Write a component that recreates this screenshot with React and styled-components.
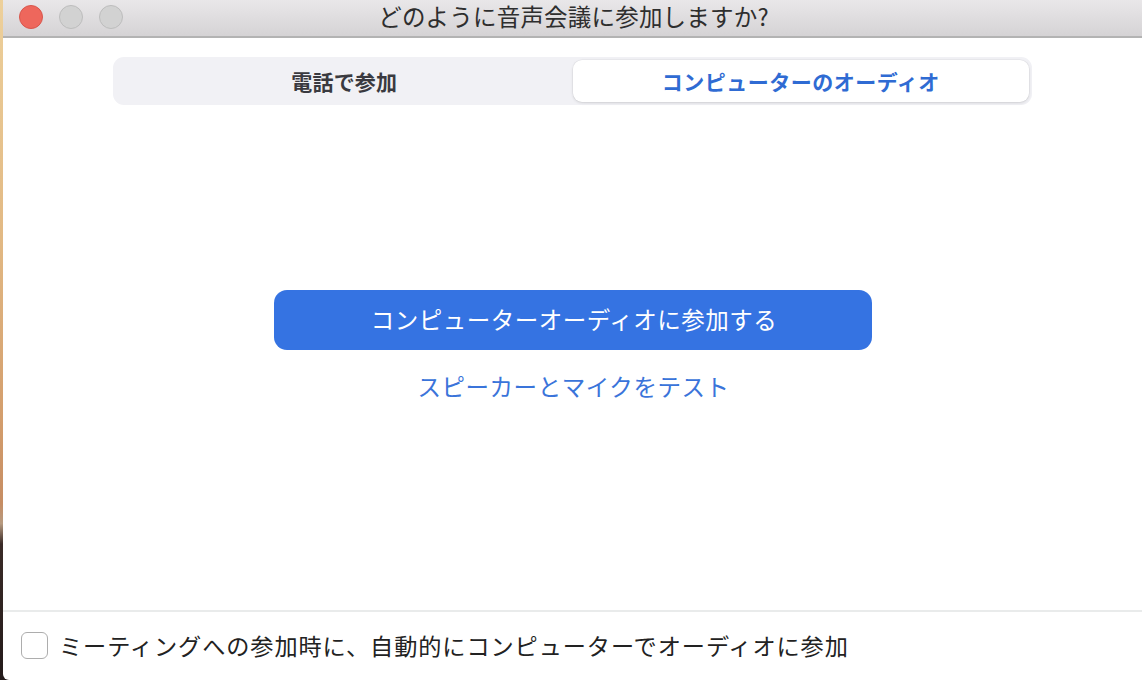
import React from "react";
import styled, { createGlobalStyle } from "styled-components";

const Global = createGlobalStyle`
  html, body { margin: 0; padding: 0; background: #231a1a; }
  body { font-family: "Noto Sans CJK JP", "Noto Sans", sans-serif; }
  * { box-sizing: border-box; }
`;

const Screen = styled.div`
  display: flex;
  width: 1142px;
  height: 680px;
  overflow: hidden;
  background: #231a1a;
`;

const DesktopStrip = styled.div`
  width: 3px;
  flex: none;
  background: linear-gradient(
    to bottom,
    #edd09b 0%,
    #e2b984 35%,
    #d39d6c 62%,
    #c68d63 74%,
    #b69a80 77%,
    #3a2b27 80%,
    #231a1a 100%
  );
`;

const Window = styled.div`
  flex: 1;
  display: flex;
  flex-direction: column;
  background: #ffffff;
  border-bottom-left-radius: 6px;
  overflow: hidden;
`;

const TitleBar = styled.div`
  height: 38px;
  flex: none;
  display: grid;
  grid-template-columns: 1fr auto 1fr;
  align-items: center;
  background: linear-gradient(to bottom, #e9e7e9, #d5d3d5);
  border-bottom: 2px solid #b3b3b3;
`;

const Lights = styled.div`
  display: flex;
  gap: 16px;
  align-items: center;
  padding-left: 16px;
  margin-top: -3px;
`;

const Light = styled.span`
  width: 24px;
  height: 24px;
  border-radius: 50%;
  background: ${(p) => (p.$red ? "#ee675c" : "#d2d2d2")};
  border: 1px solid ${(p) => (p.$red ? "#d8564c" : "#bdbdbd")};
`;

const Title = styled.div`
  font-size: 23.5px;
  color: #2e2e2e;
  letter-spacing: 0.2px;
  line-height: 1;
  margin-top: -2px;
  margin-left: 2px;
`;

const Body = styled.div`
  flex: 1;
  display: flex;
  flex-direction: column;
  align-items: center;
  padding-top: 19px;
`;

const Segmented = styled.div`
  width: 919px;
  height: 48px;
  display: grid;
  grid-template-columns: 1fr 1fr;
  padding: 3px;
  border-radius: 11px;
  background: #f1f1f5;
`;

const Segment = styled.div`
  display: flex;
  align-items: center;
  justify-content: center;
  border-radius: 9px;
  font-size: 21px;
  font-weight: 700;
  letter-spacing: ${(p) => (p.$active ? "0.5px" : "0.2px")};
  color: ${(p) => (p.$active ? "#2f6bd3" : "#3a3a40")};
  background: ${(p) => (p.$active ? "#ffffff" : "transparent")};
  box-shadow: ${(p) =>
    p.$active ? "0 1px 3px rgba(0,0,0,0.12), 0 0 0 0.5px rgba(0,0,0,0.05)" : "none"};
`;

const Actions = styled.div`
  display: flex;
  flex-direction: column;
  align-items: center;
  margin-top: 185px;
  gap: 21px;
`;

const PrimaryButton = styled.button`
  width: 598px;
  height: 60px;
  border: none;
  border-radius: 13px;
  background: #3573e2;
  color: #ffffff;
  font-family: inherit;
  font-size: 23.5px;
  letter-spacing: 0.5px;
  display: flex;
  align-items: center;
  justify-content: center;
  padding: 0 0 2px 3px;
`;

const TextLink = styled.a`
  font-size: 23.5px;
  color: #3a74da;
  letter-spacing: 0.55px;
  line-height: 30px;
  text-decoration: none;
  margin-left: 2px;
`;

const Footer = styled.div`
  height: 70px;
  flex: none;
  border-top: 2px solid #e9ebeb;
  display: flex;
  align-items: center;
  gap: 11px;
  padding-left: 18px;
  padding-bottom: 2px;
`;

const Checkbox = styled.span`
  width: 27px;
  height: 27px;
  border-radius: 6px;
  border: 1px solid #adadad;
  background: #ffffff;
  flex: none;
`;

const FooterLabel = styled.span`
  font-size: 23.2px;
  color: #222222;
  letter-spacing: 0.9px;
`;

export default function App() {
  return (
    <>
      <Global />
      <Screen>
        <DesktopStrip />
        <Window>
          <TitleBar>
            <Lights>
              <Light $red />
              <Light />
              <Light />
            </Lights>
            <Title>どのように音声会議に参加しますか?</Title>
            <span />
          </TitleBar>
          <Body>
            <Segmented>
              <Segment>電話で参加</Segment>
              <Segment $active>コンピューターのオーディオ</Segment>
            </Segmented>
            <Actions>
              <PrimaryButton>コンピューターオーディオに参加する</PrimaryButton>
              <TextLink>スピーカーとマイクをテスト</TextLink>
            </Actions>
          </Body>
          <Footer>
            <Checkbox />
            <FooterLabel>ミーティングへの参加時に、自動的にコンピューターでオーディオに参加</FooterLabel>
          </Footer>
        </Window>
      </Screen>
    </>
  );
}
